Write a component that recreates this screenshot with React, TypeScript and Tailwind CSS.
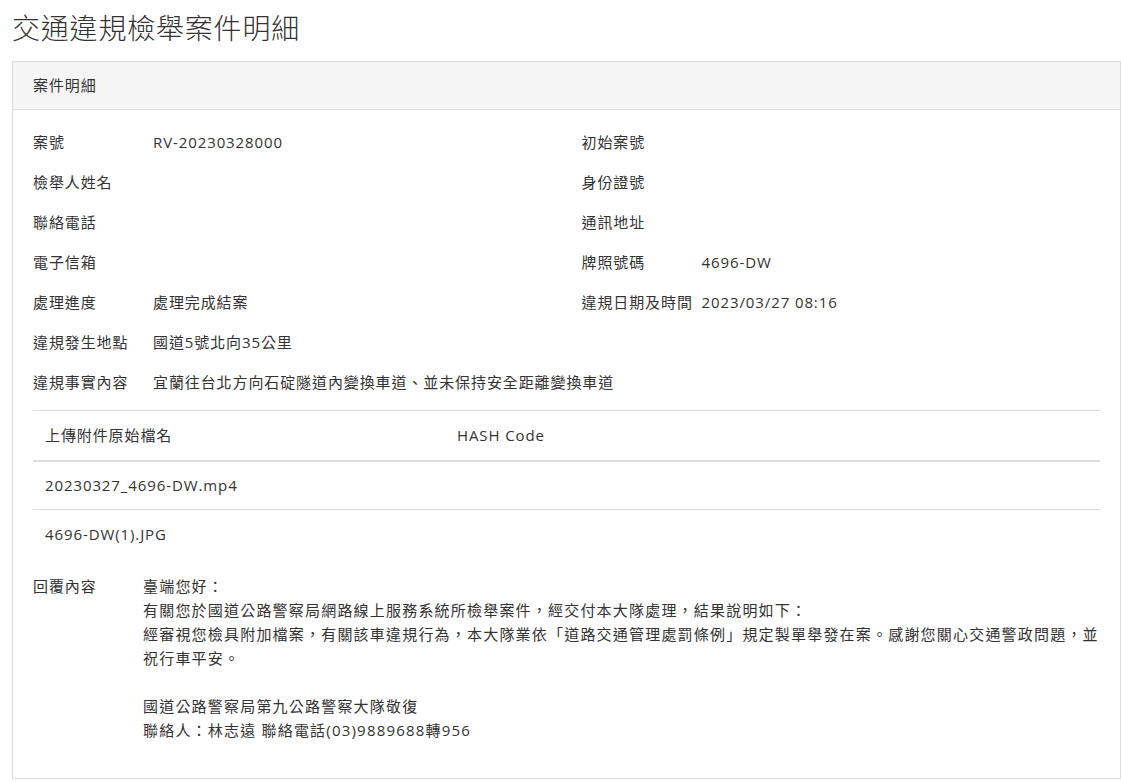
const font = { fontFamily: '"Open Sans", "Noto Sans CJK TC", sans-serif' };

type Field = { label: string; value?: string };

const leftFields: Field[] = [
  { label: "案號", value: "RV-20230328000" },
  { label: "檢舉人姓名" },
  { label: "聯絡電話" },
  { label: "電子信箱" },
  { label: "處理進度", value: "處理完成結案" },
];

const rightFields: Field[] = [
  { label: "初始案號" },
  { label: "身份證號" },
  { label: "通訊地址" },
  { label: "牌照號碼", value: "4696-DW" },
  { label: "違規日期及時間", value: "2023/03/27 08:16" },
];

const files = ["20230327_4696-DW.mp4", "4696-DW(1).JPG"];

function Row({ label, value }: Field) {
  return (
    <div className="flex h-[40px] items-center">
      <div className="w-[120px] shrink-0 whitespace-nowrap">{label}</div>
      <div>{value}</div>
    </div>
  );
}

export default function App() {
  return (
    <div className="min-h-screen bg-white text-[15px] text-[#333]" style={font}>
      <h1 className="pl-[12px] pt-[8px] text-[28px] font-light leading-[40px] tracking-[0.8px]">
        交通違規檢舉案件明細
      </h1>
      <div className="ml-[12px] mt-[13px] w-[1109px] border border-[#ddd] tracking-[0.9px]">
        <div className="flex h-[48px] items-center border-b border-[#ddd] bg-[#f5f5f5] px-[20px]">
          案件明細
        </div>
        <div className="px-[20px] pb-[36px] pt-[12px]">
          <div className="grid grid-cols-2">
            <div>
              {leftFields.map((f) => (
                <Row key={f.label} {...f} />
              ))}
            </div>
            <div className="pl-[15px]">
              {rightFields.map((f) => (
                <Row key={f.label} {...f} />
              ))}
            </div>
          </div>
          <Row label="違規發生地點" value="國道5號北向35公里" />
          <Row label="違規事實內容" value="宜蘭往台北方向石碇隧道內變換車道、並未保持安全距離變換車道" />

          <table className="mt-[8px] w-full border-collapse">
            <thead>
              <tr className="h-[50px] border-t border-b-2 border-[#ddd] text-left">
                <th className="w-[412px] px-[12px] font-normal">上傳附件原始檔名</th>
                <th className="px-[12px] font-normal">HASH Code</th>
              </tr>
            </thead>
            <tbody>
              {files.map((f, i) => (
                <tr key={f} className={i === 0 ? "h-[49px] border-b border-[#ddd]" : "h-[49px]"}>
                  <td className="px-[12px]">{f}</td>
                  <td className="px-[12px]"></td>
                </tr>
              ))}
            </tbody>
          </table>

          <div className="mt-[15px] flex leading-[24px]">
            <div className="w-[110px] shrink-0">回覆內容</div>
            <div className="tracking-[1.2px]">
              <p>臺端您好：</p>
              <p>有關您於國道公路警察局網路線上服務系統所檢舉案件，經交付本大隊處理，結果說明如下：</p>
              <p>
                經審視您檢具附加檔案，有關該車違規行為，本大隊業依「道路交通管理處罰條例」規定製單舉發在案。感謝您關心交通警政問題，並祝行車平安。
              </p>
              <p className="h-[24px]"></p>
              <p>國道公路警察局第九公路警察大隊敬復</p>
              <p>聯絡人：林志遠 聯絡電話(03)9889688轉956</p>
            </div>
          </div>
        </div>
      </div>
    </div>
  );
}
